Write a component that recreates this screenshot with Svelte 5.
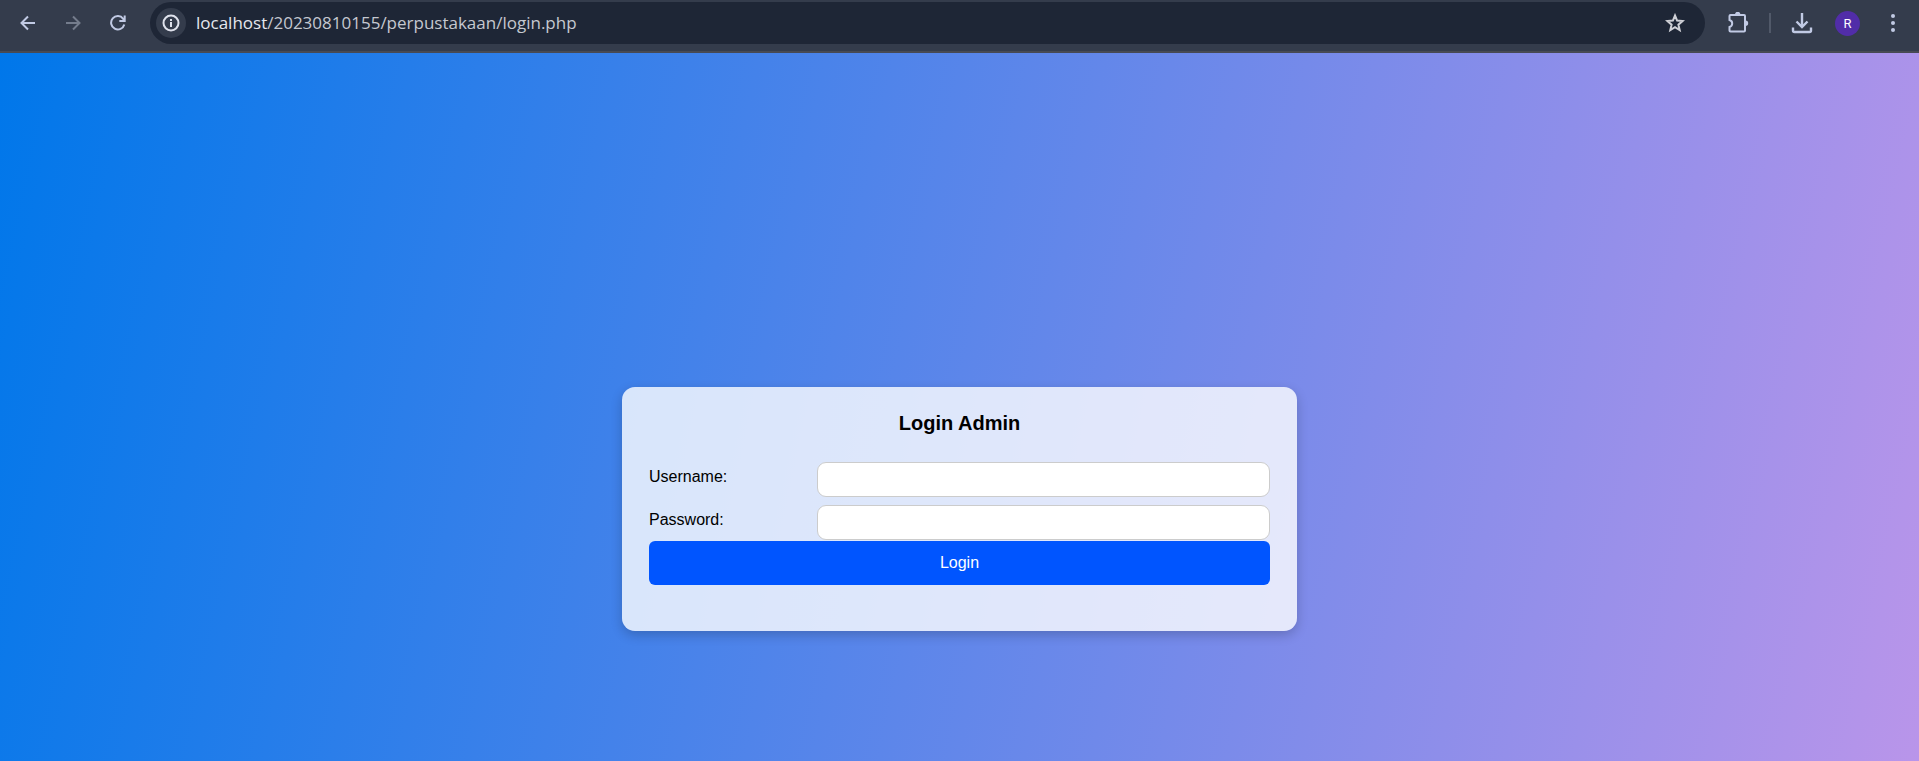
<script>
  let address = $state('localhost/20230810155/perpustakaan/login.php');
  let username = $state('');
  let password = $state('');

  const slash = $derived(address.indexOf('/'));
  const host = $derived(address.slice(0, slash));
  const path = $derived(address.slice(slash));
</script>

<div class="window">
  <header class="toolbar">
    <nav class="history" aria-label="History">
      <button class="tool" aria-label="Back">
        <svg width="16" height="16" viewBox="0 0 16 16"><path d="M15 8H2M8 1.5 1.5 8 8 14.5" /></svg>
      </button>
      <button class="tool muted" aria-label="Forward">
        <svg width="16" height="16" viewBox="0 0 16 16"><path d="M1 8h13M8 1.5 14.500 8 8 14.500" /></svg>
      </button>
      <button class="tool" aria-label="Reload">
        <svg width="16" height="16" viewBox="0 0 16 16"><path d="M14.300 9.500A6.700 6.700 0 1 1 13.200 3.800L14.500 5.500M14.700.5V6H9.300" /></svg>
      </button>
    </nav>

    <div class="omnibox">
      <button class="site" aria-label="Site information">
        <svg width="18" height="18" viewBox="0 0 18 18"><circle cx="9" cy="9" r="7.500" /><path d="M9 8v5M9 5v2" /></svg>
      </button>
      <a class="address" href="#login"><span class="host">{host}</span>{path}</a>
      <button class="star" aria-label="Bookmark">
        <svg width="20" height="20" viewBox="0 0 20 20"><path d="m10 2.500 2.100 5.100 5.500.5-4.200 3.600 1.300 5.400L10 14.200l-4.700 2.900 1.300-5.400-4.200-3.600 5.500-.5z" /></svg>
      </button>
    </div>

    <div class="actions">
      <button class="tool" aria-label="Extensions">
        <svg width="22" height="22" viewBox="0 0 22 22">
          <path d="M3.500 3H17q1 0 1 1v14.500q0 1-1 1H3.500q-1 0-1-1V15c3.600-1 3.600-6 0-7V4q0-1 1-1z" />
          <path class="solid" d="M8 2.500a2.700 2.700 0 0 1 5.400 0zM18.500 8.500a2.700 2.700 0 0 1 0 5.400z" />
        </svg>
      </button>
      <span class="divider"></span>
      <button class="tool" aria-label="Downloads">
        <svg class="bold" width="22" height="22" viewBox="0 0 22 22"><path d="M11 1v13.500M5.500 9.500 11 15l5.500-5.500M2 15.500v3q0 1.500 1.500 1.500h15q1.500 0 1.500-1.500v-3" /></svg>
      </button>
      <button class="avatar" aria-label="Profile">R</button>
      <button class="tool" aria-label="Menu">
        <svg width="20" height="20" viewBox="0 0 20 20"><g class="solid"><circle cx="10" cy="3" r="2" /><circle cx="10" cy="10" r="2" /><circle cx="10" cy="17" r="2" /></g></svg>
      </button>
    </div>
  </header>

  <main class="page">
    <form class="card" id="login" onsubmit={(event) => event.preventDefault()}>
      <h1>Login Admin</h1>
      <div class="fields">
        <label for="username">Username:</label>
        <input id="username" type="text" bind:value={username} />
        <label for="password">Password:</label>
        <input id="password" type="password" bind:value={password} />
      </div>
      <button class="submit" type="submit">Login</button>
    </form>
  </main>
</div>

<style>
  :global(body) {
    margin: 0;
  }

  .window {
    display: flex;
    flex-direction: column;
    min-height: 100vh;
    font-family: 'Liberation Sans', Arial, sans-serif;
    font-size: 16px;
    color: #000;
  }

  button {
    padding: 0;
    border: 0;
    background: none;
    color: inherit;
    font: inherit;
    cursor: pointer;
  }

  svg {
    display: block;
    fill: none;
    stroke: currentColor;
    stroke-width: 2;
  }

  .bold {
    stroke-width: 2.4;
  }

  .solid {
    fill: currentColor;
    stroke: none;
  }

  .toolbar {
    display: flex;
    align-items: center;
    box-sizing: border-box;
    height: 53px;
    padding: 2px 10px 7px 12px;
    border-bottom: 2px solid #474a54;
    background: #343c4c;
    color: #c1cae4;
  }

  .history {
    display: flex;
    gap: 13px;
  }

  .tool {
    display: grid;
    place-items: center;
    width: 32px;
    height: 32px;
  }

  .muted {
    color: #747c8c;
  }

  .omnibox {
    display: flex;
    flex: 1;
    align-items: center;
    box-sizing: border-box;
    height: 42px;
    margin-left: 16px;
    padding: 0 20px 0 6px;
    border-radius: 21px;
    background: #1e2636;
  }

  .site {
    display: grid;
    place-items: center;
    width: 30px;
    height: 30px;
    border-radius: 50%;
    background: #343c4c;
    color: #dfe2ec;
  }

  .address {
    flex: 1;
    margin-left: 10px;
    color: #c5c8d0;
    font-family: 'Segoe UI', 'Open Sans', sans-serif;
    font-size: 17px;
    line-height: 24px;
    text-decoration: none;
  }

  .host {
    color: #e6e8ee;
  }

  .star {
    color: #cfd0d6;
  }

  .actions {
    display: flex;
    align-items: center;
    margin-left: 17px;
  }

  .divider {
    width: 2px;
    height: 20px;
    margin: 0 15px;
    background: #515969;
  }

  .avatar {
    width: 25px;
    height: 25px;
    margin: 0 17px;
    border-radius: 50%;
    background: #512da8;
    color: #fff;
    font-family: Roboto, sans-serif;
    font-size: 13px;
  }

  .page {
    display: flex;
    flex: 1;
    align-items: flex-start;
    justify-content: center;
    padding: 334px 16px 32px;
    background: linear-gradient(102deg, #0077ea, #b995ea);
  }

  .card {
    box-sizing: border-box;
    width: 100%;
    max-width: 675px;
    padding: 24px 27px 46px;
    border-radius: 13px;
    background: rgba(255, 255, 255, 0.8);
    box-shadow: 0 4px 12px rgba(0, 0, 0, 0.2);
  }

  h1 {
    margin: 0 0 27px;
    font-size: 20px;
    line-height: 24px;
    text-align: center;
  }

  .fields {
    display: grid;
    grid-template-columns: 27% 1fr;
    row-gap: 8px;
    margin-bottom: 1px;
  }

  label {
    padding-top: 5px;
    line-height: 20px;
  }

  input {
    box-sizing: border-box;
    width: 100%;
    height: 35px;
    padding: 0 8px;
    border: 1px solid #ccc;
    border-radius: 9px;
    background: #fff;
    font: inherit;
  }

  .submit {
    display: block;
    width: 100%;
    height: 44px;
    border-radius: 6px;
    background: #0055ff;
    color: #fff;
  }
</style>
